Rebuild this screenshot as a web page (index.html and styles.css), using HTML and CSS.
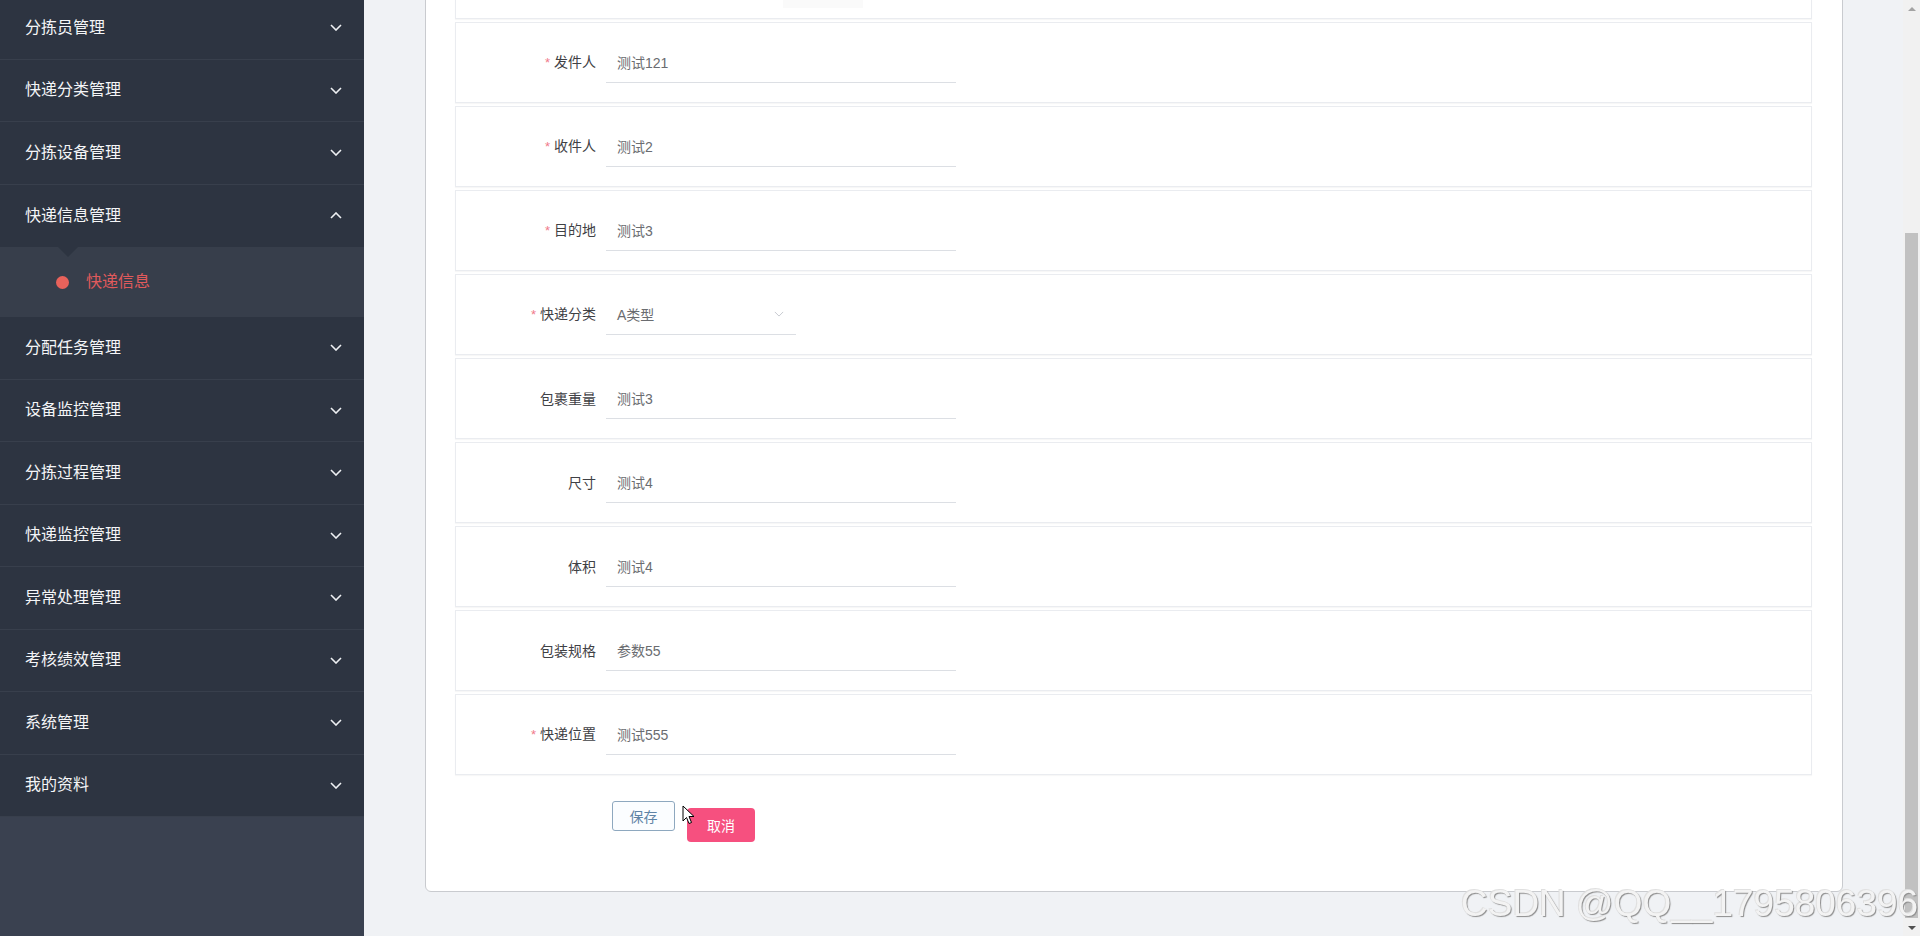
FILE: index.html
```html
<!DOCTYPE html>
<html lang="zh-CN">
<head>
<meta charset="utf-8">
<title>快递信息</title>
<link rel="stylesheet" href="styles.css">
</head>
<body>
<div class="layout">
  <aside class="sidebar">
    <ul class="menu">
      <li class="menu-item"><span>分拣员管理</span><svg class="chev" viewBox="0 0 12 7"><path d="M1 1 L6 6 L11 1"/></svg></li>
      <li class="menu-item"><span>快递分类管理</span><svg class="chev" viewBox="0 0 12 7"><path d="M1 1 L6 6 L11 1"/></svg></li>
      <li class="menu-item"><span>分拣设备管理</span><svg class="chev" viewBox="0 0 12 7"><path d="M1 1 L6 6 L11 1"/></svg></li>
      <li class="menu-item open"><span>快递信息管理</span><svg class="chev" viewBox="0 0 12 7"><path d="M1 6 L6 1 L11 6"/></svg></li>
      <li class="submenu"><span class="notch"></span><span class="dot"></span><span class="sub-text">快递信息</span></li>
      <li class="menu-item"><span>分配任务管理</span><svg class="chev" viewBox="0 0 12 7"><path d="M1 1 L6 6 L11 1"/></svg></li>
      <li class="menu-item"><span>设备监控管理</span><svg class="chev" viewBox="0 0 12 7"><path d="M1 1 L6 6 L11 1"/></svg></li>
      <li class="menu-item"><span>分拣过程管理</span><svg class="chev" viewBox="0 0 12 7"><path d="M1 1 L6 6 L11 1"/></svg></li>
      <li class="menu-item"><span>快递监控管理</span><svg class="chev" viewBox="0 0 12 7"><path d="M1 1 L6 6 L11 1"/></svg></li>
      <li class="menu-item"><span>异常处理管理</span><svg class="chev" viewBox="0 0 12 7"><path d="M1 1 L6 6 L11 1"/></svg></li>
      <li class="menu-item"><span>考核绩效管理</span><svg class="chev" viewBox="0 0 12 7"><path d="M1 1 L6 6 L11 1"/></svg></li>
      <li class="menu-item"><span>系统管理</span><svg class="chev" viewBox="0 0 12 7"><path d="M1 1 L6 6 L11 1"/></svg></li>
      <li class="menu-item"><span>我的资料</span><svg class="chev" viewBox="0 0 12 7"><path d="M1 1 L6 6 L11 1"/></svg></li>
    </ul>
  </aside>

  <main class="main">
    <div class="card">
      <div class="form-row partial"><div class="faint"></div></div>
      <div class="form-row"><label class="label"><span class="req">*</span>发件人</label><div class="input">测试121</div></div>
      <div class="form-row"><label class="label"><span class="req">*</span>收件人</label><div class="input">测试2</div></div>
      <div class="form-row"><label class="label"><span class="req">*</span>目的地</label><div class="input">测试3</div></div>
      <div class="form-row"><label class="label"><span class="req">*</span>快递分类</label><div class="input select"><span>A类型</span><svg class="sel-chev" viewBox="0 0 12 7"><path d="M1 1 L6 6 L11 1"/></svg></div></div>
      <div class="form-row"><label class="label">包裹重量</label><div class="input">测试3</div></div>
      <div class="form-row"><label class="label">尺寸</label><div class="input">测试4</div></div>
      <div class="form-row"><label class="label">体积</label><div class="input">测试4</div></div>
      <div class="form-row"><label class="label">包装规格</label><div class="input">参数55</div></div>
      <div class="form-row last"><label class="label"><span class="req">*</span>快递位置</label><div class="input">测试555</div></div>
      <div class="actions">
        <button class="btn btn-save">保存</button>
        <button class="btn btn-cancel">取消</button>
      </div>
    </div>
  </main>

  <div class="vscroll">
    <div class="sb-btn"><span class="tri-up"></span></div>
    <div class="sb-track"><div class="sb-thumb"></div></div>
    <div class="sb-btn"><span class="tri-down"></span></div>
  </div>
</div>

<svg class="cursor" viewBox="0 0 13 20"><path d="M1 1 L1 16 L4.5 12.5 L7 18.5 L9.5 17.5 L7 11.5 L12 11.5 Z"/></svg>
<div class="watermark">CSDN @QQ__1795806396</div>
</body>
</html>
```

FILE: styles.css
```css
html, body {
  margin: 0;
  padding: 0;
  height: 100%;
  overflow: hidden;
  font-family: "Liberation Sans", "Noto Sans CJK SC", sans-serif;
}

.layout {
  display: flex;
  height: 936px;
}

/* ---------- sidebar ---------- */
.sidebar {
  width: 364px;
  flex-shrink: 0;
  background: #3a4150;
  overflow: hidden;
}

.menu {
  list-style: none;
  margin: -3px 0 0;
  padding: 0;
}

.menu-item {
  height: 62.5px;
  box-sizing: border-box;
  background: #2d3441;
  border-bottom: 1px solid #383f4c;
  display: flex;
  align-items: center;
  justify-content: space-between;
  padding: 0 22px 0 25px;
  font-size: 16px;
  line-height: 20px;
  color: #f4f5f7;
}

.menu-item.open {
  border-bottom: none;
}

.chev {
  width: 12px;
  height: 7px;
  fill: none;
  stroke: #eef0f3;
  stroke-width: 1.6;
}

.submenu {
  position: relative;
  height: 70px;
  background: #373e4b;
  display: flex;
  align-items: center;
  padding-left: 56px;
}

.notch {
  position: absolute;
  top: 0;
  left: 58px;
  width: 0;
  height: 0;
  border-left: 10px solid transparent;
  border-right: 10px solid transparent;
  border-top: 10px solid #2d3441;
}

.dot {
  width: 13px;
  height: 13px;
  border-radius: 50%;
  background: #e8625b;
  margin-right: 17px;
}

.sub-text {
  font-size: 16px;
  line-height: 20px;
  color: #e05a5c;
}

/* ---------- main ---------- */
.main {
  flex: 1;
  min-width: 0;
  background: #f0f2f5;
  display: flex;
  flex-direction: column;
  justify-content: flex-end;
  padding: 0 60px 44px 61px;
  overflow: hidden;
}

.card {
  flex-shrink: 0;
  background: #fff;
  border: 1px solid #c9cbcf;
  border-radius: 6px;
  padding: 0 30px 49px 29px;
}

.form-row {
  height: 81px;
  box-sizing: border-box;
  border: 1px solid #eaecf0;
  box-shadow: 0 1px 1px rgba(0, 0, 0, 0.03);
  margin-bottom: 3px;
  display: flex;
  align-items: center;
}

.form-row.last {
  margin-bottom: 0;
}

.form-row.partial {
  align-items: flex-end;
}

.faint {
  width: 80px;
  height: 18px;
  margin: 0 0 10px 327px;
  background: #fafafa;
}

.label {
  width: 150px;
  box-sizing: border-box;
  padding-right: 10px;
  text-align: right;
  font-size: 14px;
  line-height: 20px;
  color: #3f4145;
}

.req {
  color: #f07a8a;
  font-size: 13px;
  margin-right: 4px;
}

.input {
  width: 350px;
  height: 40px;
  box-sizing: border-box;
  border-bottom: 1px solid #dcdfe4;
  padding-left: 11px;
  display: flex;
  align-items: center;
  font-size: 14px;
  color: #6a6c70;
}

.input.select {
  width: 190px;
  justify-content: space-between;
  padding-right: 12px;
}

.sel-chev {
  width: 10px;
  height: 6px;
  fill: none;
  stroke: #c8cbd1;
  stroke-width: 1.2;
}

.actions {
  margin-top: 26px;
  padding-left: 157px;
  display: flex;
  align-items: flex-start;
}

.btn {
  font-family: "Liberation Sans", "Noto Sans CJK SC", sans-serif;
  font-size: 14px;
  padding: 0;
  cursor: pointer;
  box-sizing: border-box;
}

.btn-save {
  width: 63px;
  height: 30px;
  border: 1px solid #8ea8bf;
  border-radius: 3px;
  background: #fbfdff;
  color: #5f84a6;
}

.btn-cancel {
  width: 68px;
  height: 34px;
  margin: 7px 0 0 12px;
  border: none;
  border-radius: 4px;
  background: #f6507f;
  color: #fff;
}

/* ---------- page scrollbar ---------- */
.vscroll {
  width: 17px;
  flex-shrink: 0;
  background: #f1f1f1;
  display: flex;
  flex-direction: column;
}

.sb-btn {
  height: 17px;
  display: flex;
  align-items: center;
  justify-content: center;
}

.tri-up {
  width: 0;
  height: 0;
  border-left: 4px solid transparent;
  border-right: 4px solid transparent;
  border-bottom: 4px solid #a3a3a3;
}

.tri-down {
  width: 0;
  height: 0;
  border-left: 4px solid transparent;
  border-right: 4px solid transparent;
  border-top: 4px solid #505050;
}

.sb-track {
  flex: 1;
  padding-top: 216px;
}

.sb-thumb {
  height: 685px;
  margin: 0 2px;
  background: #c1c1c1;
}

/* ---------- overlays ---------- */
.cursor {
  position: fixed;
  left: 682px;
  top: 805px;
  width: 13px;
  height: 20px;
  fill: #fff;
  stroke: #000;
  stroke-width: 1;
}

.watermark {
  position: fixed;
  left: 1461px;
  top: 883px;
  font-family: "Liberation Sans", sans-serif;
  font-size: 37px;
  line-height: 42px;
  white-space: nowrap;
  color: #f3f3f3;
  text-shadow: 1px 1px 1px #8c8c8c, -1px -1px 0 #e0e0e0;
}
```
